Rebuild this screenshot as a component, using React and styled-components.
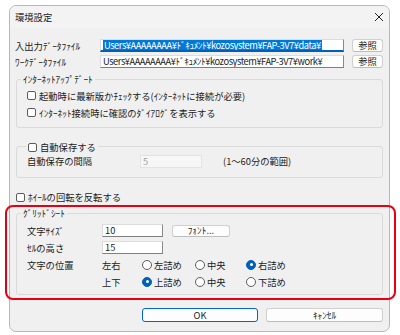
import React from 'react';
import styled, { createGlobalStyle } from 'styled-components';

const GlobalStyle = createGlobalStyle`
  html, body { margin: 0; padding: 0; background: #ffffff; }
  body {
    font-family: "Noto Sans CJK JP", "Noto Sans", sans-serif;
    font-size: 9.3px;
    color: #1b1b1b;
  }
  * { box-sizing: border-box; }
`;

const Page = styled.div`
  position: relative;
  width: 400px;
  height: 335px;
  padding: 5px 0 0 9px;
`;

const Dialog = styled.div`
  width: 381px;
  background: #f0f0f0;
  border: 1px solid #b8b8b8;
  border-radius: 7px;
  overflow: hidden;
  display: flex;
  flex-direction: column;
`;

const TitleBar = styled.div`
  height: 22px;
  display: flex;
  align-items: center;
  justify-content: space-between;
  padding: 0 5px 0 5px;
  background: #f3f3f3;
`;

const Title = styled.span`
  line-height: 12px;
`;

const Close = styled.span`
  display: flex;
  width: 10px;
  height: 10px;
`;

const Body = styled.div`
  display: flex;
  flex-direction: column;
  padding: 11px 6px 9px 6px;
`;

const FileRow = styled.div`
  display: flex;
  align-items: center;
  height: 13px;
  gap: 8px;
  margin-top: ${p => p.$mt || 0}px;
`;

const Label = styled.span`
  width: ${p => p.$w}px;
  flex: none;
  line-height: 12px;
  white-space: nowrap;
  margin-left: ${p => p.$ml || 0}px;
`;

const Field = styled.div`
  flex: ${p => (p.$w ? 'none' : '1')};
  width: ${p => (p.$w ? `${p.$w}px` : 'auto')};
  min-width: 0;
  height: 13px;
  display: flex;
  align-items: center;
  padding: 0 2px;
  background: ${p => (p.$disabled ? '#f7f7f7' : '#ffffff')};
  color: ${p => (p.$disabled ? '#a0a0a0' : '#1b1b1b')};
  border: 1px solid ${p => (p.$disabled ? '#e3e3e3' : '#dcdcdc')};
  border-bottom: ${p => (p.$focused ? '2px solid #005fb8' : p.$disabled ? '1px solid #e3e3e3' : '1px solid #7f7f7f')};
  border-right-color: ${p => (p.$disabled ? '#e3e3e3' : '#8a8a8a')};
  overflow: hidden;
  white-space: nowrap;
  line-height: 11px;
  letter-spacing: ${p => (p.$path ? '-0.45px' : '0')};
`;

const Selected = styled.span`
  background: #0078d7;
  color: #ffffff;
  line-height: 11px;
  padding: 0 1px;
`;

const Button = styled.div`
  flex: none;
  width: ${p => p.$w}px;
  height: ${p => p.$h || 13}px;
  display: flex;
  align-items: center;
  justify-content: center;
  background: #fdfdfd;
  border: 1px solid ${p => (p.$default ? '#0067c0' : '#d0d0d0')};
  border-bottom-color: ${p => (p.$default ? '#0067c0' : '#bdbdbd')};
  border-radius: 3px;
  line-height: 11px;
  margin-left: ${p => p.$ml || 0}px;
`;

const Group = styled.div`
  display: flex;
  flex-direction: column;
  border: 1px solid #dadada;
  border-radius: 3px;
  margin-top: ${p => p.$mt}px;
  padding: 0 10px ${p => p.$pb}px 10px;
`;

const Legend = styled.div`
  align-self: flex-start;
  display: flex;
  align-items: center;
  gap: 3px;
  height: 12px;
  line-height: 12px;
  margin: ${p => p.$top}px 0 0 ${p => p.$left}px;
  padding: 0 2px;
  background: #f0f0f0;
`;

const Row = styled.div`
  display: flex;
  align-items: center;
  height: ${p => p.$h || 17}px;
  margin-top: ${p => p.$mt || 0}px;
`;

const Box = styled.span`
  flex: none;
  width: 9px;
  height: 9px;
  border: 1px solid #5c5c5c;
  border-radius: 2px;
  background: #ffffff;
`;

const Text = styled.span`
  line-height: 12px;
  white-space: nowrap;
  margin-left: ${p => p.$ml || 0}px;
`;

const Option = styled.span`
  flex: none;
  display: flex;
  align-items: center;
  gap: 2px;
  width: ${p => (p.$w ? `${p.$w}px` : 'auto')};
`;

const Radio = styled.span`
  position: relative;
  flex: none;
  width: 10px;
  height: 10px;
  border-radius: 50%;
  border: 1px solid ${p => (p.$on ? '#005fb8' : '#5c5c5c')};
  background: ${p => (p.$on ? '#005fb8' : '#ffffff')};
  &::after {
    content: '';
    display: ${p => (p.$on ? 'block' : 'none')};
    position: absolute;
    left: 2.5px;
    top: 2.5px;
    width: 3px;
    height: 3px;
    border-radius: 50%;
    background: #ffffff;
  }
`;

const Footer = styled.div`
  display: flex;
  justify-content: flex-end;
  gap: 8px;
  margin-top: 13px;
`;

const Highlight = styled.div`
  position: absolute;
  left: 5px;
  top: 205px;
  width: 391px;
  height: 95px;
  border: 2px solid #e60012;
  border-radius: 8px;
  pointer-events: none;
`;

const Check = ({ children, gap = 3 }) => (
  <>
    <Box />
    <Text $ml={gap}>{children}</Text>
  </>
);

const Opt = ({ on, w, children }) => (
  <Option $w={w}>
    <Radio $on={on} />
    <Text>{children}</Text>
  </Option>
);

export default function App() {
  return (
    <>
      <GlobalStyle />
      <Page>
        <Dialog>
          <TitleBar>
            <Title>環境設定</Title>
            <Close>
              <svg width="10" height="10" viewBox="0 0 10 10">
                <path d="M1 1 L9 9 M9 1 L1 9" stroke="#222" strokeWidth="1" fill="none" />
              </svg>
            </Close>
          </TitleBar>
          <Body>
            <FileRow>
              <Label $w={77} $ml={-1}>入出力ﾃﾞｰﾀﾌｧｲﾙ</Label>
              <Field $focused $path>
                <Selected>Users¥AAAAAAAA¥ﾄﾞｷｭﾒﾝﾄ¥kozosystem¥FAP-3V7¥data¥</Selected>
              </Field>
              <Button $w={31}>参照</Button>
            </FileRow>
            <FileRow $mt={3}>
              <Label $w={77} $ml={-1}>ﾜｰｸﾃﾞｰﾀﾌｧｲﾙ</Label>
              <Field $path>Users¥AAAAAAAA¥ﾄﾞｷｭﾒﾝﾄ¥kozosystem¥FAP-3V7¥work¥</Field>
              <Button $w={31}>参照</Button>
            </FileRow>

            <Group $mt={11} $pb={6}>
              <Legend $top={-7} $left={-6}>ｲﾝﾀｰﾈｯﾄｱｯﾌﾟﾃﾞｰﾄ</Legend>
              <Row $mt={2}>
                <Check>起動時に最新版かﾁｪｯｸする(ｲﾝﾀｰﾈｯﾄに接続が必要)</Check>
              </Row>
              <Row>
                <Check>ｲﾝﾀｰﾈｯﾄ接続時に確認のﾀﾞｲｱﾛｸﾞを表示する</Check>
              </Row>
            </Group>

            <Group $mt={18} $pb={9}>
              <Legend $top={-6} $left={-1}>
                <Box />
                <Text>自動保存する</Text>
              </Legend>
              <Row $h={14} $mt={1}>
                <Label $w={113}>自動保存の間隔</Label>
                <Field $w={62} $disabled>5</Field>
                <Text $ml={21}>(1～60分の範囲)</Text>
              </Row>
            </Group>

            <Row $h={14} $mt={12}>
              <Check>ﾎｲｰﾙの回転を反転する</Check>
            </Row>

            <Group $mt={9} $pb={4}>
              <Legend $top={-7} $left={-6}>ｸﾞﾘｯﾄﾞｼｰﾄ</Legend>
              <Row $mt={3}>
                <Label $w={75}>文字ｻｲｽﾞ</Label>
                <Field $w={61}>10</Field>
                <Button $w={58} $h={12} $ml={9}>ﾌｫﾝﾄ...</Button>
              </Row>
              <Row>
                <Label $w={75}>ｾﾙの高さ</Label>
                <Field $w={61}>15</Field>
              </Row>
              <Row>
                <Label $w={75}>文字の位置</Label>
                <Label $w={40}>左右</Label>
                <Opt w={53}>左詰め</Opt>
                <Opt w={51}>中央</Opt>
                <Opt on>右詰め</Opt>
              </Row>
              <Row>
                <Label $w={75} />
                <Label $w={40}>上下</Label>
                <Opt on w={53}>上詰め</Opt>
                <Opt w={51}>中央</Opt>
                <Opt>下詰め</Opt>
              </Row>
            </Group>

            <Footer>
              <Button $w={116} $h={14} $default>OK</Button>
              <Button $w={117} $h={14}>ｷｬﾝｾﾙ</Button>
            </Footer>
          </Body>
        </Dialog>
        <Highlight />
      </Page>
    </>
  );
}
